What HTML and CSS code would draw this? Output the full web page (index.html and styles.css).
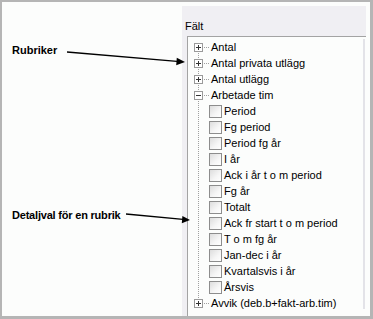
FILE: index.html
```html
<!DOCTYPE html>
<html lang="sv">
<head>
    <meta charset="UTF-8">
    <title>Fält</title>
    <link rel="stylesheet" href="styles.css">
</head>
<body>
    <div class="screen">
        <div class="notes">
            <div class="note note-top">Rubriker</div>
            <div class="note note-detail">Detaljval för en rubrik</div>
        </div>

        <div class="panel">
            <div class="panel-title">Fält</div>
            <div class="tree-box">
                <ul class="tree">
                    <li class="node first">
                        <span class="guide"><svg class="expander" width="9" height="9" viewBox="0 0 9 9"><rect x="0.5" y="0.5" width="8" height="8" fill="#fff" stroke="#9a9a9a"/><path d="M2 4.5h5M4.5 2v5" stroke="#333"/></svg></span>
                        <span class="branch"></span><span class="label">Antal</span>
                    </li>
                    <li class="node">
                        <span class="guide"><svg class="expander" width="9" height="9" viewBox="0 0 9 9"><rect x="0.5" y="0.5" width="8" height="8" fill="#fff" stroke="#9a9a9a"/><path d="M2 4.5h5M4.5 2v5" stroke="#333"/></svg></span>
                        <span class="branch"></span><span class="label">Antal privata utlägg</span>
                    </li>
                    <li class="node">
                        <span class="guide"><svg class="expander" width="9" height="9" viewBox="0 0 9 9"><rect x="0.5" y="0.5" width="8" height="8" fill="#fff" stroke="#9a9a9a"/><path d="M2 4.5h5M4.5 2v5" stroke="#333"/></svg></span>
                        <span class="branch"></span><span class="label">Antal utlägg</span>
                    </li>
                    <li class="node">
                        <span class="guide"><svg class="expander" width="9" height="9" viewBox="0 0 9 9"><rect x="0.5" y="0.5" width="8" height="8" fill="#fff" stroke="#9a9a9a"/><path d="M2 4.5h5" stroke="#333"/></svg></span>
                        <span class="branch"></span><span class="label">Arbetade tim</span>
                    </li>
                    <li class="leaf"><span class="guide"></span><span class="check"></span><span class="label">Period</span></li>
                    <li class="leaf"><span class="guide"></span><span class="check"></span><span class="label">Fg period</span></li>
                    <li class="leaf"><span class="guide"></span><span class="check"></span><span class="label">Period fg år</span></li>
                    <li class="leaf"><span class="guide"></span><span class="check"></span><span class="label">I år</span></li>
                    <li class="leaf"><span class="guide"></span><span class="check"></span><span class="label">Ack i år t o m period</span></li>
                    <li class="leaf"><span class="guide"></span><span class="check"></span><span class="label">Fg år</span></li>
                    <li class="leaf"><span class="guide"></span><span class="check"></span><span class="label">Totalt</span></li>
                    <li class="leaf"><span class="guide"></span><span class="check"></span><span class="label">Ack fr start t o m period</span></li>
                    <li class="leaf"><span class="guide"></span><span class="check"></span><span class="label">T o m fg år</span></li>
                    <li class="leaf"><span class="guide"></span><span class="check"></span><span class="label">Jan-dec i år</span></li>
                    <li class="leaf"><span class="guide"></span><span class="check"></span><span class="label">Kvartalsvis i år</span></li>
                    <li class="leaf"><span class="guide"></span><span class="check"></span><span class="label">Årsvis</span></li>
                    <li class="node last">
                        <span class="guide"><svg class="expander" width="9" height="9" viewBox="0 0 9 9"><rect x="0.5" y="0.5" width="8" height="8" fill="#fff" stroke="#9a9a9a"/><path d="M2 4.5h5M4.5 2v5" stroke="#333"/></svg></span>
                        <span class="branch"></span><span class="label">Avvik (deb.b+fakt-arb.tim)</span>
                    </li>
                </ul>
                <div class="scroll-edge"></div>
            </div>
        </div>

        <!-- pointer arrows drawn over the picture -->
        <svg class="arrows" width="373" height="319" viewBox="0 0 373 319">
            <line x1="67" y1="52" x2="177" y2="61.4" stroke="#000" stroke-width="1.3"/>
            <polygon points="185,62 176.8,57.8 176.2,65.2" fill="#000"/>
            <line x1="126" y1="214" x2="183" y2="219.3" stroke="#000" stroke-width="1.3"/>
            <polygon points="190,220 182.4,216.1 181.8,223.3" fill="#000"/>
        </svg>
    </div>
</body>
</html>
```

FILE: styles.css
```css
body {
    margin: 0;
    background: #fff;
    font-family: "Liberation Sans", Arial, sans-serif;
}

.screen {
    position: relative;
    width: 373px;
    height: 319px;
    box-sizing: border-box;
    border-style: solid;
    border-color: #b5b5b5;
    border-width: 2px 3px 3px 2px;
    background: #fcfdfc;
    display: flex;
    overflow: hidden;
}

.notes {
    width: 180px;
    padding: 42px 0 0 10px;
    box-sizing: border-box;
}

.note {
    font-size: 11px;
    font-weight: bold;
    line-height: 13px;
    color: #000;
}

.note-detail {
    margin-top: 152px;
    letter-spacing: -0.2px;
}

.panel {
    width: 184px;
    margin-top: 4px;
    background: #f0eff3;
    display: flex;
    flex-direction: column;
}

.panel-title {
    font-size: 11px;
    line-height: 13px;
    color: #000;
    padding: 14px 0 0 3px;
}

.tree-box {
    flex: 1;
    margin: 3px 0 0 5px;
    background: #fcfdfc;
    border-top: 1px solid #a3a3a3;
    border-left: 1px solid #a3a3a3;
    display: flex;
}

.tree {
    flex: 1;
    list-style: none;
    margin: 0;
    padding: 2px 0 0 6px;
    font-size: 11px;
    color: #000;
}

.tree li {
    display: flex;
    align-items: center;
    height: 16px;
    white-space: nowrap;
}

.guide {
    width: 9px;
    height: 16px;
    flex: none;
    display: flex;
    align-items: flex-start;
    background: repeating-linear-gradient(to bottom, #a0a0a0 0 1px, transparent 1px 2px) 4px 0 / 1px 100% no-repeat;
}

.first .guide {
    background-position: 4px 8px;
    background-size: 1px 8px;
}

.last .guide {
    background-size: 1px 8px;
}

.expander {
    display: block;
    margin-top: 4px;
}

.branch {
    width: 6px;
    height: 16px;
    flex: none;
    background: repeating-linear-gradient(to right, #a0a0a0 0 1px, transparent 1px 2px) 1px 8px / 5px 1px no-repeat;
}

.node .label {
    margin-left: 2px;
    line-height: 16px;
}

.check {
    width: 13px;
    height: 13px;
    box-sizing: border-box;
    flex: none;
    margin-left: 6px;
    border: 1px solid #8d8d8d;
    background: linear-gradient(135deg, #dddddd 0%, #f6f6f6 60%, #ffffff 100%);
}

.leaf .label {
    margin-left: 2px;
    line-height: 16px;
}

.scroll-edge {
    width: 2px;
    margin: 2px 1px 7px 0;
    background: #e3e3e8;
}

.arrows {
    position: absolute;
    left: -2px;
    top: -2px;
    pointer-events: none;
}
```
